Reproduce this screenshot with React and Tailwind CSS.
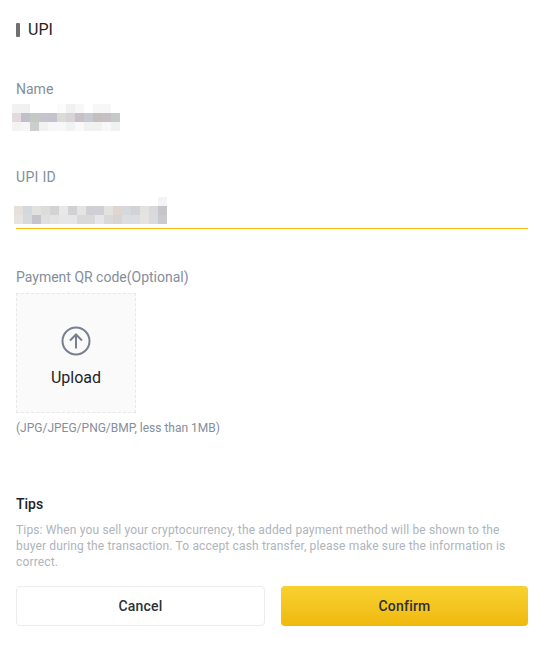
import React from 'react';

const nameRows = [
  ['#f1f1f2', '#f0f1f2', '#ffffff', '#ffffff', '#ffffff', '#fbfbfb', '#f0f0f0', '#f7f7f7', '#ffffff', '#f7f7f7', '#f7f7f8', '#ffffff'],
  ['#e4dadd', '#c1bfcb', '#c5c9c6', '#c6c5cd', '#c4c2cd', '#dadad6', '#d6d4d6', '#c9bfc8', '#c8c8d0', '#c5c0c0', '#c6bfc4', '#c5cac6'],
  ['#f4f3f1', '#f6f6f8', '#cdcdcd', '#f1f1f1', '#f7f7f9', '#f8f8f8', '#f2f2f2', '#f9f9f9', '#f1f1f1', '#f1f1f1', '#f8f8f8', '#f1f1f1'],
];

const idRows = [
  ['#ffffff', '#ffffff', '#ffffff', '#ffffff', '#ffffff', '#ffffff', '#ffffff', '#ffffff', '#ffffff', '#ffffff', '#ffffff', '#ffffff', '#ffffff', '#ffffff', '#ffffff', '#ffffff', '#f4f4f6'],
  ['#e6dfda', '#d2d8dc', '#e1e2e0', '#dcdcdc', '#d3d3d3', '#e8e8e8', '#d2d0d2', '#e4e4e4', '#cfcfd6', '#cfcfd6', '#e2e2e0', '#dfd6d0', '#d6d8de', '#d2d3d6', '#e2e2e2', '#d8d8dd', '#c6c6ca'],
  ['#e6e4e2', '#d8d9da', '#c4c4cb', '#dfdfe0', '#e3e3e3', '#e6e6e6', '#e6e6e8', '#d9d9da', '#d9d9da', '#e6e6e8', '#d9d9d9', '#d6d4d4', '#dcdde0', '#dcdde0', '#e6e3e1', '#d9dadd', '#c9c9ce'],
];

const Mosaic = ({ rows, className }) => (
  <div className={className}>
    {rows.map((row, r) => (
      <div key={r} className="flex h-[9px]">
        {row.map((c, i) => (
          <div key={i} className="w-[9px] h-[9px]" style={{ backgroundColor: c }} />
        ))}
      </div>
    ))}
  </div>
);

const App = () => {
  return (
    <div className="w-[556px] h-[649px] bg-white overflow-hidden pl-4 pr-7 pt-5 font-['Roboto',sans-serif]">
      <div className="flex items-center h-5">
        <span className="w-1 h-3.5 rounded-[1px] bg-[#707070] mr-2" />
        <span className="text-base text-[#1e2329]">UPI</span>
      </div>

      <div className="mt-[39px] text-sm leading-5 text-[#848e9c]">Name</div>
      <Mosaic rows={nameRows} className="mt-[5px] -ml-1" />

      <div className="mt-[36px] text-sm leading-5 tracking-[0.3px] text-[#848e9c]">UPI ID</div>
      <div className="mt-[2px] h-[40px] pt-2 border-b border-[#f0b90b]">
        <Mosaic rows={idRows} className="-ml-0.5" />
      </div>

      <div className="mt-[38px] text-sm leading-5 text-[#848e9c]">Payment QR code(Optional)</div>
      <div className="mt-1.5 w-[120px] h-[120px] border border-dashed border-[#e6e8ea] bg-[#fafafa] flex flex-col items-center pt-8">
        <svg width="30" height="30" viewBox="0 0 30 30" fill="none" stroke="#76808f" strokeWidth="2">
          <circle cx="15" cy="15" r="13.500" />
          <path d="M15 22.500V8.500M9 14.500L15 8.500l6 6" />
        </svg>
        <span className="mt-2.5 text-base leading-6 text-[#1e2329]">Upload</span>
      </div>
      <div className="mt-[7px] text-xs leading-4 text-[#848e9c]">(JPG/JPEG/PNG/BMP, less than 1MB)</div>

      <div className="mt-[58px] text-sm leading-5 font-medium text-[#1e2329]">Tips</div>
      <p className="mt-[8px] text-xs leading-4 tracking-[0.15px] text-[#aeb4bc]">
        Tips: When you sell your cryptocurrency, the added payment method will be shown to the buyer during the transaction. To accept cash transfer, please make sure the information is correct.
      </p>

      <div className="mt-4 flex gap-4">
        <button className="flex-1 h-10 rounded border border-[#eaecef] bg-white text-sm font-medium tracking-[0.2px] text-[#2b3139]">Cancel</button>
        <button className="flex-1 h-10 rounded bg-gradient-to-b from-[#f8d12f] to-[#f0b90b] text-sm font-medium tracking-[0.2px] text-[#2b3139]">Confirm</button>
      </div>
    </div>
  );
};

export default App;
